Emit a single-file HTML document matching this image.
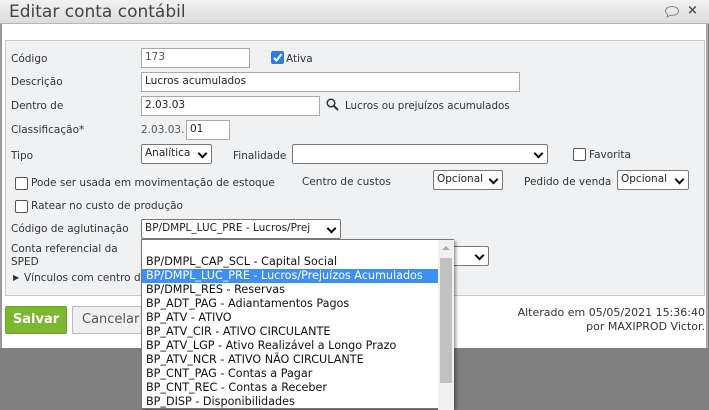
<!DOCTYPE html>
<html><head><meta charset="utf-8"><style>
*{box-sizing:border-box}
body{margin:0;width:709px;height:407px;overflow:hidden;background:#808080;font-family:"DejaVu Sans","Liberation Sans",sans-serif;font-size:10.5px;color:#333;position:relative}
.a{position:absolute;white-space:nowrap}
.dlg{position:absolute;left:0;top:0;width:708px;height:348px;background:#fff;border-left:2px solid #999;border-right:2px solid #aaa}
.title{position:absolute;left:0;top:0;width:709px;height:24px;background:linear-gradient(#f2f2f2,#dcdcdc);border-bottom:1px solid #b5b5b5}
.panel{position:absolute;left:5px;top:40px;width:700px;height:256px;background:#f0f1f3;border:1px solid #c9c9c9}
.in{position:absolute;background:#fff;border:1px solid #a9a9a9;height:20px;padding:2px 3px;font-size:10.5px;color:#222}
.sel{position:absolute;background:#fff;border:1px solid #777;border-radius:2px;height:20px;padding:2px 3px;font-size:10.5px;color:#222}
.sel:after{content:"";position:absolute;right:5px;top:5px;width:5px;height:5px;border-right:2px solid #111;border-bottom:2px solid #111;transform:rotate(45deg)}
.cb{position:absolute;width:13px;height:13px;border:1px solid #555;border-radius:2px;background:#fff}
.dd{position:absolute;left:141px;top:239px;width:313px;height:170px;background:#fff;border:1px solid #777;box-shadow:2px 2px 3px rgba(0,0,0,.4)}
.dd div{position:absolute;left:0;width:296px;height:14px;padding-left:4px;font-size:11.2px;line-height:14px;color:#111}
</style></head><body>
<div class="dlg"></div>
<div class="title"><span class="a" style="left:9px;top:2px;font-size:17px;color:#444">Editar conta contábil</span>
<svg class="a" style="left:664px;top:5px" width="16" height="13"><ellipse cx="8" cy="6" rx="6.5" ry="4.5" fill="none" stroke="#888"/><path d="M4 9 L3 12 L7 10" fill="#fff" stroke="#888"/></svg>
<span class="a" style="left:687px;top:3px;font-size:13px;font-weight:bold;color:#555">×</span></div>
<div class="panel"></div>
<span class="a" style="left:11px;top:53px">Código</span>
<div class="in" style="left:141px;top:48px;width:109px;color:#555">173</div>
<div class="cb" style="left:271px;top:51px;background:#2f7be0;border-color:#2f7be0"><svg width="11" height="11" style="position:absolute;left:0;top:0"><path d="M2 6 L4.5 8.5 L9.5 2" stroke="#fff" stroke-width="2" fill="none"/></svg></div>
<span class="a" style="left:286px;top:53px">Ativa</span>
<span class="a" style="left:11px;top:76px">Descrição</span>
<div class="in" style="left:141px;top:72px;width:379px">Lucros acumulados</div>
<span class="a" style="left:11px;top:100px">Dentro de</span>
<div class="in" style="left:141px;top:96px;width:179px">2.03.03</div>
<svg class="a" style="left:326px;top:98px" width="13" height="13"><circle cx="5" cy="5" r="3.8" fill="none" stroke="#333" stroke-width="1.5"/><path d="M8 8 L12 12" stroke="#333" stroke-width="2"/></svg>
<span class="a" style="left:345px;top:100px;font-size:10.3px">Lucros ou prejuízos acumulados</span>
<span class="a" style="left:11px;top:124px">Classificação*</span>
<span class="a" style="left:141px;top:124px;color:#555">2.03.03.</span>
<div class="in" style="left:186px;top:120px;width:44px;color:#222">01</div>
<span class="a" style="left:11px;top:150px">Tipo</span>
<div class="sel" style="left:141px;top:144px;width:71px">Analítica</div>
<span class="a" style="left:233px;top:150px">Finalidade</span>
<div class="sel" style="left:292px;top:144px;width:256px"></div>
<div class="cb" style="left:573px;top:148px"></div>
<span class="a" style="left:589px;top:149px">Favorita</span>
<div class="cb" style="left:15px;top:177px"></div>
<span class="a" style="left:31px;top:177px">Pode ser usada em movimentação de estoque</span>
<span class="a" style="left:302px;top:176px">Centro de custos</span>
<div class="sel" style="left:433px;top:170px;width:70px">Opcional</div>
<span class="a" style="left:524px;top:176px">Pedido de venda</span>
<div class="sel" style="left:617px;top:170px;width:72px">Opcional</div>
<div class="cb" style="left:15px;top:200px"></div>
<span class="a" style="left:31px;top:200px">Ratear no custo de produção</span>
<span class="a" style="left:11px;top:223px">Código de aglutinação</span>
<div class="sel" style="left:141px;top:219px;width:200px">BP/DMPL_LUC_PRE - Lucros/Prej</div>
<span class="a" style="left:11px;top:243px">Conta referencial da</span>
<span class="a" style="left:11px;top:256px">SPED</span>
<div class="sel" style="left:420px;top:246px;width:69px"></div>
<span class="a" style="left:13px;top:273px;font-size:8px">▶</span>
<span class="a" style="left:24px;top:272px">Vínculos com centro de custos</span>
<div class="a" style="left:5px;top:306px;width:62px;height:28px;background:#7cb82f;border:1px solid #6aa128;border-radius:2px;color:#fff;font-weight:bold;font-size:13px;line-height:26px;text-align:center">Salvar</div>
<div class="a" style="left:72px;top:306px;width:80px;height:28px;background:#f0f0f0;border:1px solid #bbb;border-radius:2px;color:#555;font-size:13px;line-height:26px;padding-left:9px">Cancelar</div>
<span class="a" style="right:4px;top:306px;text-align:right;line-height:14px;font-size:11px">Alterado em 05/05/2021 15:36:40<br>por MAXIPROD Victor.</span>
<div class="dd">
<div style="top:15px">BP/DMPL_CAP_SCL - Capital Social</div>
<div style="top:29px;background:#3f8ff0;color:#fff">BP/DMPL_LUC_PRE - Lucros/Prejuízos Acumulados</div>
<div style="top:43px">BP/DMPL_RES - Reservas</div>
<div style="top:57px">BP_ADT_PAG - Adiantamentos Pagos</div>
<div style="top:71px">BP_ATV - ATIVO</div>
<div style="top:85px">BP_ATV_CIR - ATIVO CIRCULANTE</div>
<div style="top:99px">BP_ATV_LGP - Ativo Realizável a Longo Prazo</div>
<div style="top:113px">BP_ATV_NCR - ATIVO NÃO CIRCULANTE</div>
<div style="top:127px">BP_CNT_PAG - Contas a Pagar</div>
<div style="top:141px">BP_CNT_REC - Contas a Receber</div>
<div style="top:155px">BP_DISP - Disponibilidades</div>
<span style="position:absolute;left:296px;top:0;width:16px;height:170px;background:#f0f0f0"></span>
<span style="position:absolute;left:300px;top:6px;width:0;height:0;border-left:4px solid transparent;border-right:4px solid transparent;border-bottom:4px solid #aaa"></span>
<span style="position:absolute;left:298px;top:18px;width:12px;height:125px;background:#c1c1c1"></span>
</div>
</body></html>
